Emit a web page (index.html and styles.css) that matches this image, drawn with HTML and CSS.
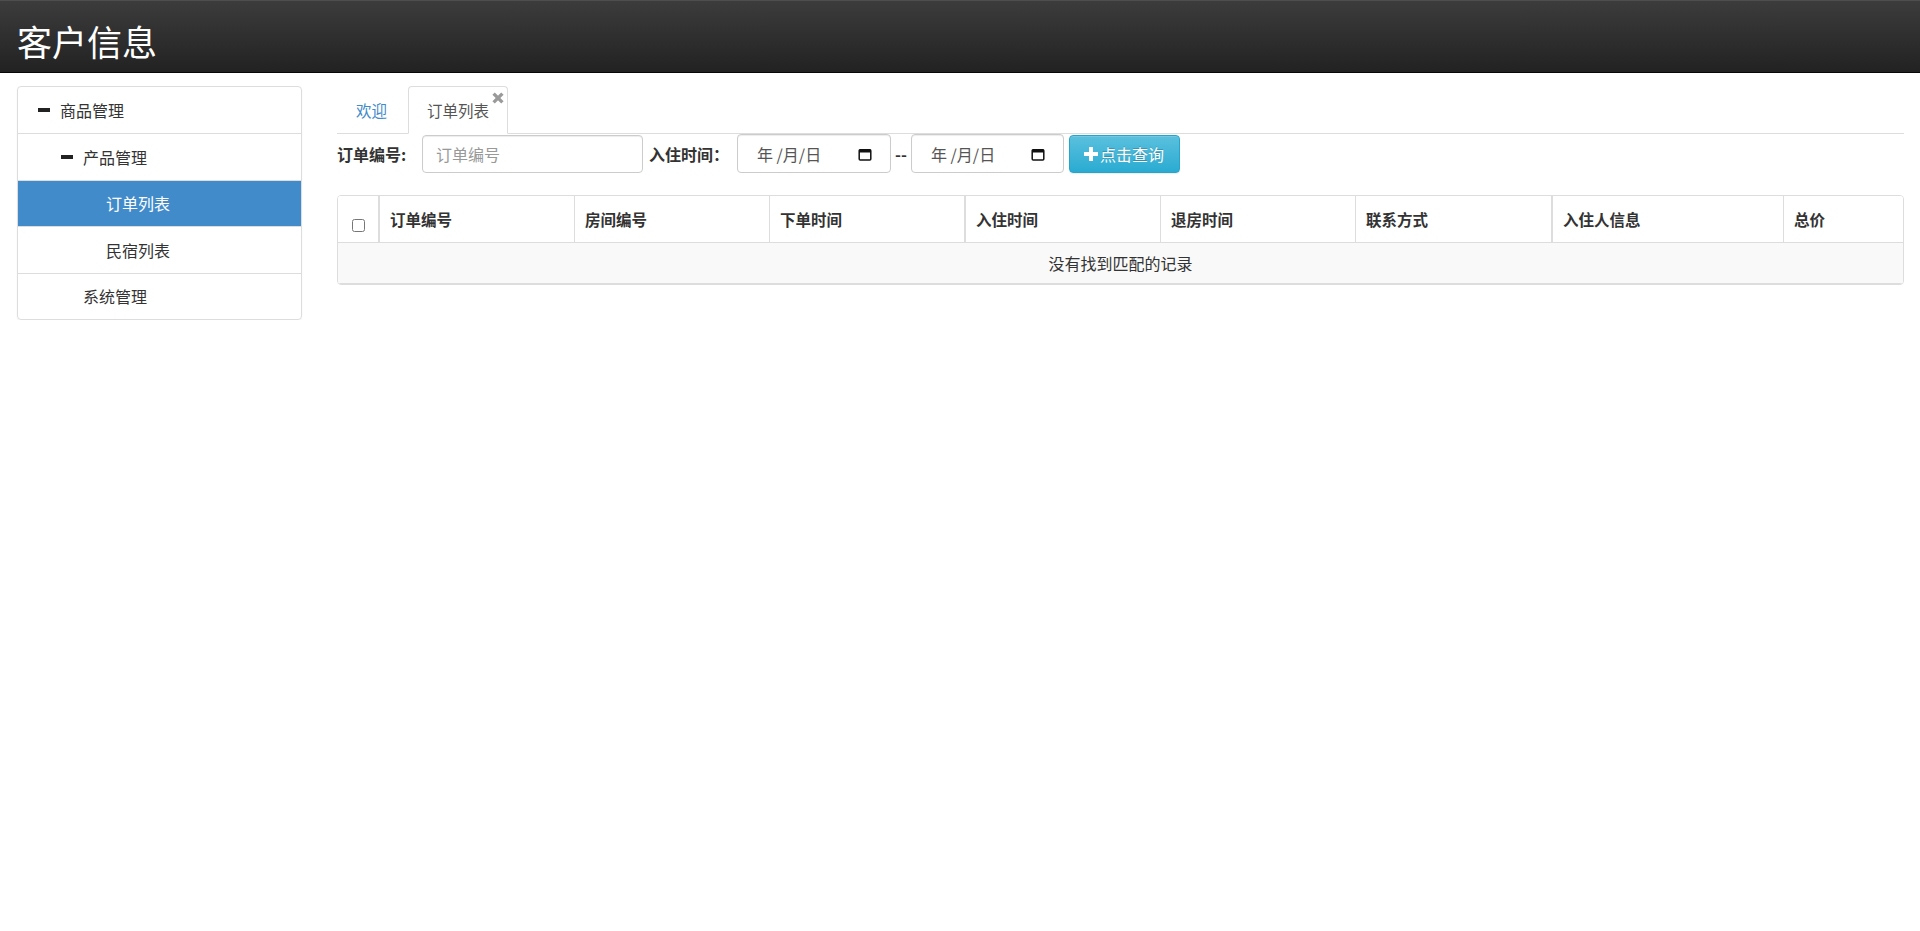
FILE: index.html
```html
<!DOCTYPE html>
<html lang="zh-CN">
<head>
<meta charset="utf-8">
<title>客户信息</title>
<link rel="stylesheet" href="styles.css">
</head>
<body>
<header class="topbar"><h1 class="brand">客户信息</h1></header>
<div class="layout">
  <aside class="sidebar">
    <ul class="menu">
      <li class="menu-item lvl1"><span class="minus"></span>商品管理</li>
      <li class="menu-item lvl2"><span class="minus"></span>产品管理</li>
      <li class="menu-item lvl3 active">订单列表</li>
      <li class="menu-item lvl3">民宿列表</li>
      <li class="menu-item lvl2-plain">系统管理</li>
    </ul>
  </aside>
  <main class="content">
    <ul class="tabs">
      <li class="tab"><a class="tab-link" href="#">欢迎</a></li>
      <li class="tab active"><a class="tab-link" href="#">订单列表</a><span class="tab-close"><svg width="12" height="12" viewBox="0 0 12 12"><path d="M1.6 1.6l8.8 8.8M10.4 1.6l-8.8 8.8" stroke="#9a9a9a" stroke-width="3.4"/></svg></span></li>
    </ul>
    <form class="search">
      <label class="search-label label-order">订单编号:</label>
      <input class="text-input" type="text" placeholder="订单编号">
      <label class="search-label label-date">入住时间：</label>
      <div class="date-input"><span class="date-text">年 /月/日</span><svg class="cal" width="14" height="14" viewBox="0 0 14 14"><path d="M2.2 2.75h9.6a1 1 0 0 1 1 1v8.2a1 1 0 0 1-1 1H2.2a1 1 0 0 1-1-1V3.75a1 1 0 0 1 1-1z" fill="none" stroke="#111" stroke-width="1.5"/><rect x="1.2" y="2.5" width="11.6" height="3" fill="#111"/></svg></div>
      <span class="date-sep">--</span>
      <div class="date-input second"><span class="date-text">年 /月/日</span><svg class="cal" width="14" height="14" viewBox="0 0 14 14"><path d="M2.2 2.75h9.6a1 1 0 0 1 1 1v8.2a1 1 0 0 1-1 1H2.2a1 1 0 0 1-1-1V3.75a1 1 0 0 1 1-1z" fill="none" stroke="#111" stroke-width="1.5"/><rect x="1.2" y="2.5" width="11.6" height="3" fill="#111"/></svg></div>
      <button class="btn-query" type="button"><svg class="plus" width="14" height="14" viewBox="0 0 14 14"><path d="M5 0h4v5h5v4H9v5H5V9H0V5h5z" fill="#fff"/></svg>点击查询</button>
    </form>
    <div class="table-wrap">
      <table class="grid">
        <colgroup>
          <col class="w-cb"><col class="w-196"><col class="w-195"><col class="w-195"><col class="w-196"><col class="w-195"><col class="w-196"><col class="w-232"><col class="w-120">
        </colgroup>
        <thead>
          <tr>
            <th class="cb-col"><input type="checkbox" class="cb"></th>
            <th class="thick">订单编号</th>
            <th>房间编号</th>
            <th>下单时间</th>
            <th class="thick">入住时间</th>
            <th>退房时间</th>
            <th>联系方式</th>
            <th class="thick">入住人信息</th>
            <th>总价</th>
          </tr>
        </thead>
        <tbody>
          <tr><td colspan="9" class="empty">没有找到匹配的记录</td></tr>
        </tbody>
      </table>
    </div>
  </main>
</div>
</body>
</html>
```

FILE: styles.css
```css
* { box-sizing: border-box; }
html, body { margin: 0; padding: 0; }
body {
  font-family: "Noto Sans CJK SC", "Microsoft YaHei", "Liberation Sans", sans-serif;
  font-size: 16px;
  color: #333;
  background: #fff;
}

.topbar {
  height: 73px;
  background: linear-gradient(to bottom, #3c3c3c 0%, #222 100%);
  border-top: 1px solid #4e4e4e;
  border-bottom: 1px solid #080808;
}
.brand {
  margin: 0;
  padding: 22px 0 0 17px;
  font-size: 35px;
  line-height: 35px;
  font-weight: normal;
  color: #fff;
}

.layout {
  display: grid;
  grid-template-columns: 285px 1fr;
  column-gap: 35px;
  padding: 13px 16px 0 17px;
  align-items: start;
}

/* sidebar */
.menu {
  list-style: none;
  margin: 0;
  padding: 0;
  border: 1px solid #ddd;
  border-radius: 4px;
  box-shadow: 0 1px 2px rgba(0, 0, 0, .06);
  overflow: hidden;
}
.menu-item {
  display: flex;
  align-items: center;
  height: 46.5px;
  border-top: 1px solid #ddd;
  font-size: 16px;
  color: #333;
}
.menu-item:first-child { border-top: 0; height: 46px; }
.menu-item.lvl1 { padding-left: 20px; }
.menu-item.lvl2 { padding-left: 43px; }
.menu-item.lvl3 { padding-left: 88px; }
.menu-item.lvl2-plain { padding-left: 65px; }
.menu-item.active { background: #428bca; color: #fff; }
.minus {
  display: inline-block;
  width: 12px;
  height: 4px;
  background: #222;
  margin-right: 10px;
}

/* tabs */
.tabs {
  display: flex;
  list-style: none;
  margin: 0;
  padding: 0;
  height: 48px;
  border-bottom: 1px solid #ddd;
}
.tab {
  position: relative;
  height: 48px;
  margin-bottom: -1px;
  margin-right: 2px;
  border: 1px solid transparent;
  border-radius: 4px 4px 0 0;
}
.tab-link {
  display: block;
  padding: 0 18px;
  line-height: 46px;
  font-size: 15.5px;
  color: #428bca;
  text-decoration: none;
}
.tab.active {
  background: #fff;
  border-color: #ddd;
  border-bottom-color: #fff;
}
.tab.active .tab-link { color: #555; }
.tab-close {
  position: absolute;
  top: 5px;
  right: 3px;
  width: 12px;
  height: 12px;
  line-height: 0;
}

/* search */
.search {
  display: flex;
  align-items: center;
  height: 39px;
  margin: 0;
}
.search-label {
  font-weight: bold;
  font-size: 16px;
  color: #333;
  white-space: nowrap;
}
.label-order { width: 85px; }
.label-date { width: 88px; margin-left: 6px; }
.text-input {
  width: 221px;
  height: 38px;
  padding: 0 13px;
  border: 1px solid #ccc;
  border-radius: 4px;
  box-shadow: inset 0 1px 1px rgba(0, 0, 0, .075);
  font-family: inherit;
  font-size: 16px;
  color: #555;
  outline: none;
}
.text-input::placeholder { color: #999; }
.date-input {
  display: flex;
  align-items: center;
  justify-content: space-between;
  width: 154px;
  height: 39px;
  padding: 0 18px 0 19px;
  border: 1px solid #ccc;
  border-radius: 4px;
  box-shadow: inset 0 1px 1px rgba(0, 0, 0, .075);
  color: #555;
  font-size: 16px;
}
.date-input.second { width: 153px; }
.date-text { white-space: pre; }
.cal { display: block; }
.date-sep {
  width: 20px;
  text-align: center;
  font-weight: bold;
  font-size: 16px;
}
.btn-query {
  display: inline-flex;
  align-items: center;
  margin-left: 5px;
  height: 38px;
  padding: 0 15px 0 14px;
  border: 1px solid #28a4c9;
  border-radius: 4px;
  background: linear-gradient(to bottom, #5bc0de 0%, #2aabd2 100%);
  color: #fff;
  font-family: inherit;
  font-size: 16px;
  text-shadow: 0 -1px 0 rgba(0, 0, 0, .2);
  box-shadow: inset 0 1px 0 rgba(255, 255, 255, .15), 0 1px 1px rgba(0, 0, 0, .075);
  cursor: pointer;
}
.plus { display: block; margin-right: 2px; }

/* table */
.table-wrap {
  margin-top: 22px;
  border: 1px solid #ddd;
  border-radius: 4px;
  overflow: hidden;
}
.grid {
  width: 100%;
  border-collapse: separate;
  border-spacing: 0;
  table-layout: fixed;
}
.w-cb { width: 40px; }
.w-196 { width: 196px; }
.w-195 { width: 195px; }
.w-232 { width: 232px; }
.w-120 { width: 120px; }
.grid th {
  height: 47px;
  padding: 0 10px;
  border-left: 1px solid #ddd;
  border-bottom: 1px solid #ddd;
  text-align: left;
  font-weight: bold;
  font-size: 15.5px;
  color: #333;
  vertical-align: middle;
  background: #fff;
  white-space: nowrap;
}
.grid th.cb-col { border-left: 0; padding: 0; }
.grid th.thick { border-left-width: 2px; }
.cb {
  display: block;
  width: 13px;
  height: 13px;
  margin: 12px auto 0;
}
.grid td.empty {
  height: 41px;
  padding: 0;
  text-align: center;
  vertical-align: middle;
  background: #f9f9f9;
  border-bottom: 1px solid #ddd;
  font-size: 16px;
  color: #333;
}
```
